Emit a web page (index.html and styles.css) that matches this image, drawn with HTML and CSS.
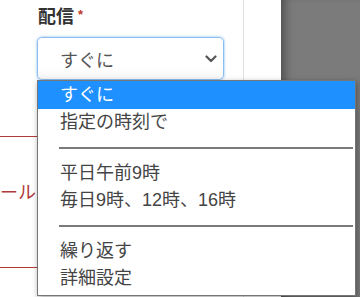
FILE: index.html
```html
<!DOCTYPE html>
<html lang="ja">
<head>
<meta charset="utf-8">
<link rel="stylesheet" href="styles.css">
</head>
<body>
<div class="page">
  <div class="main">
    <div class="col">
      <div class="label">配信<span class="req">*</span></div>
      <div class="select">
        <span class="select-text">すぐに</span>
        <svg class="chev" width="12" height="8" viewBox="0 0 12 8"><path d="M1.5 1.5 L6 6 L10.5 1.5" fill="none" stroke="#555" stroke-width="2.2" stroke-linecap="round" stroke-linejoin="round"/></svg>
      </div>
      <div class="bg-line first"></div>
      <div class="bg-text">メールI</div>
      <div class="bg-line second"></div>
    </div>
    <div class="dropdown">
      <div class="opt active">すぐに</div>
      <div class="opt">指定の時刻で</div>
      <div class="sep"></div>
      <div class="opt">平日午前9時</div>
      <div class="opt">毎日9時、12時、16時</div>
      <div class="sep"></div>
      <div class="opt">繰り返す</div>
      <div class="opt">詳細設定</div>
    </div>
  </div>
  <div class="shade"></div>
</div>
</body>
</html>
```
FILE: styles.css
```css
html, body {
  margin: 0;
  padding: 0;
}
body {
  font-family: "Liberation Sans", "Noto Sans CJK JP", sans-serif;
  font-size: 18px;
  color: #444;
  overflow: hidden;
}
.page {
  display: flex;
  height: 297px;
}
.main {
  width: 281px;
  background: #fff;
  position: relative;
  flex: none;
}
.col {
  width: 244px;
  height: 100%;
  box-sizing: border-box;
  border-right: 1px solid #e2e2e2;
  padding-top: 5px;
}
.label {
  margin-left: 38px;
  font-weight: bold;
  color: #333;
  line-height: 24px;
}
.req {
  color: #c0392b;
  font-size: 13px;
  vertical-align: top;
  margin-left: 4px;
  line-height: 20px;
}
.select {
  margin: 8px 0 0 37px;
  width: 187px;
  height: 43px;
  box-sizing: border-box;
  border: 1px solid #8bbdf0;
  border-radius: 5px;
  box-shadow: 0 0 2px 1px rgba(120, 180, 240, 0.45);
  background: linear-gradient(#fff 70%, #f6f6f6);
  display: flex;
  align-items: center;
  justify-content: space-between;
  padding: 0 6px 0 22px;
  color: #555;
}
.chev {
  display: block;
}
.bg-line {
  border-top: 1px solid #b03a3a;
}
.bg-line.first {
  margin-top: 56px;
}
.bg-text {
  color: #b03a3a;
  margin: 44px 0 0 -18px;
  line-height: 24px;
}
.bg-line.second {
  margin-top: 62px;
}
.dropdown {
  position: absolute;
  left: 37px;
  top: 80px;
  width: 319px;
  height: 216px;
  box-sizing: border-box;
  background: #fff;
  border: 1px solid #767676;
  box-shadow: 1px 2px 6px rgba(0, 0, 0, 0.35);
  display: flex;
  flex-direction: column;
}
.opt {
  height: 27px;
  line-height: 27px;
  padding-left: 22px;
  color: #444;
  white-space: nowrap;
}
.opt.active {
  background: #1e90ff;
  color: #fff;
  height: 28px;
  line-height: 28px;
}
.sep {
  height: 24px;
  display: flex;
  align-items: center;
  padding: 0 2px 0 21px;
}
.sep::before {
  content: "";
  flex: 1;
  height: 2px;
  background: #7a7a7a;
}
.shade {
  flex: 1;
  background: #7b7b7b;
  box-shadow: inset 9px 0 8px -5px rgba(0, 0, 0, 0.35);
}
```
